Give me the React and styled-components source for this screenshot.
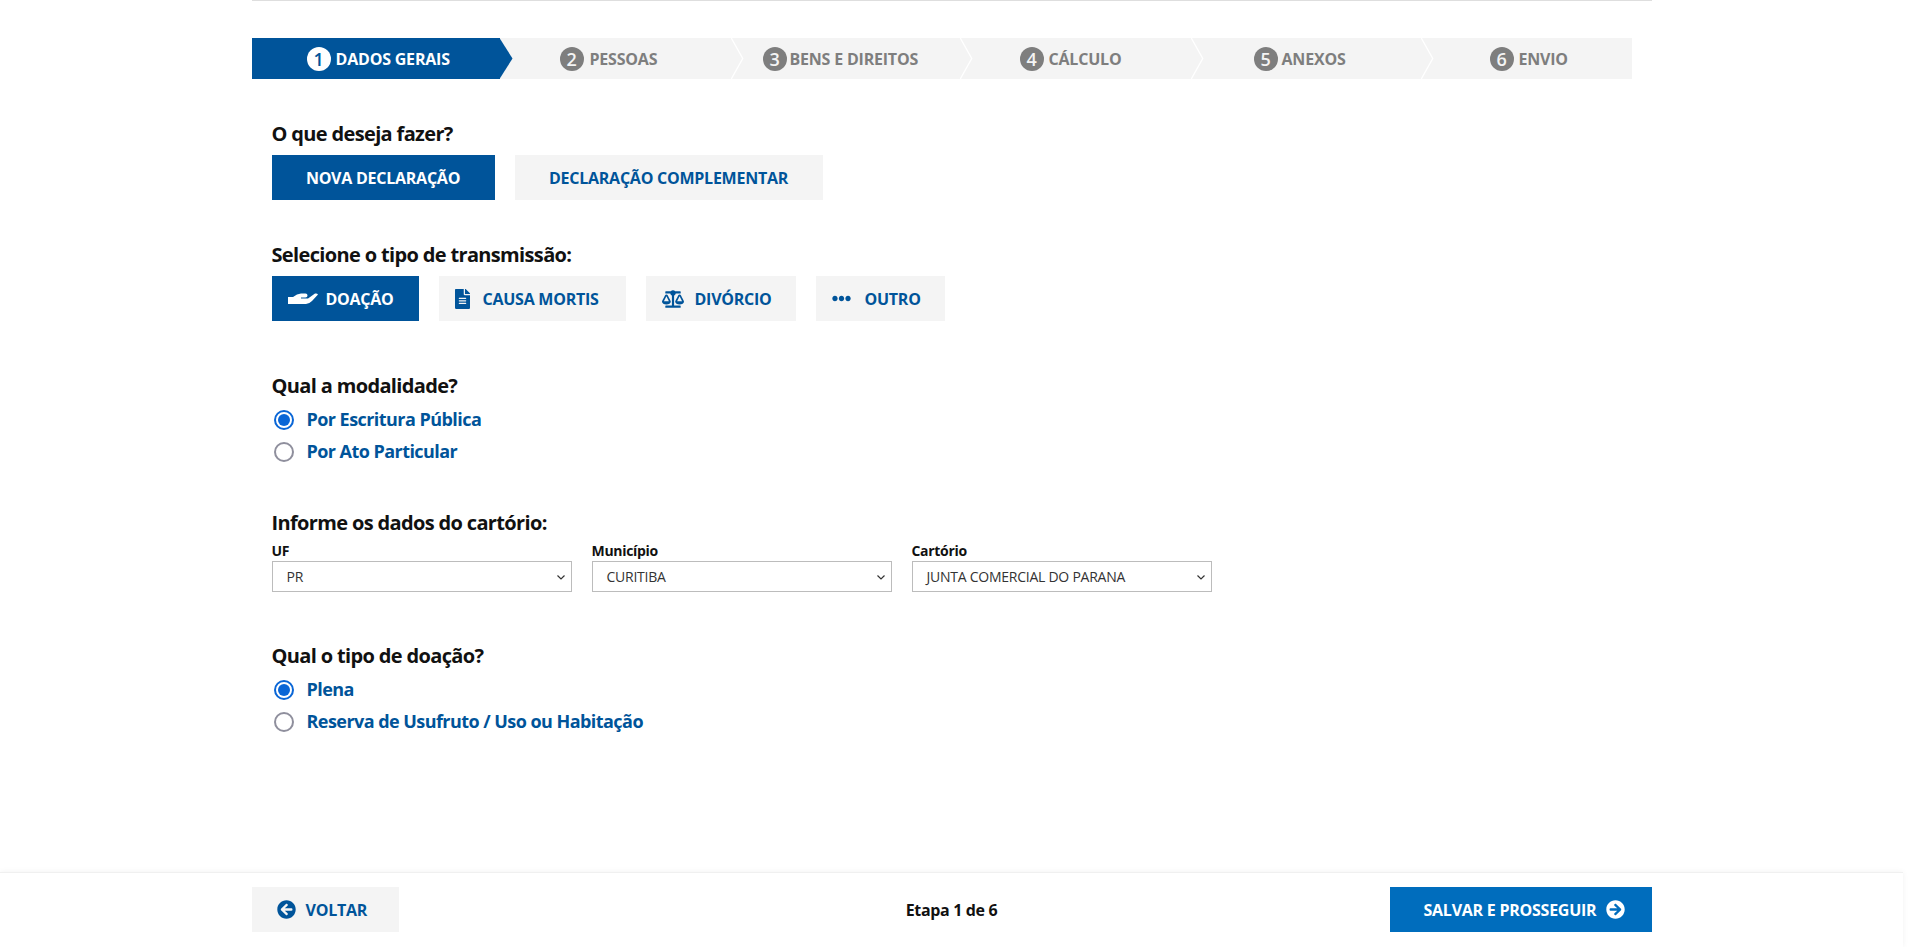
import React from "react";
import styled, { createGlobalStyle } from "styled-components";
import {
  FaFileAlt,
  FaBalanceScale,
  FaEllipsisH,
  FaArrowCircleLeft,
  FaArrowCircleRight,
} from "react-icons/fa";

const BLUE = "#00549a";
const GRAY = "#f4f4f4";
const FONT = `"Open Sans", "Noto Sans", "Liberation Sans", sans-serif`;

const Global = createGlobalStyle`
  html, body { margin: 0; padding: 0; background: #fff; overflow: hidden; }
  body { font-family: ${FONT}; }
  * { box-sizing: border-box; }
`;

const Page = styled.div`
  width: 1903px;
  height: 947px;
  display: flex;
  flex-direction: column;
`;

const Main = styled.main`
  flex: 1;
  width: 1400px;
  margin: 0 auto;
  border-top: 1px solid #dedede;
  padding-top: 37px;
`;

const Stepper = styled.ol`
  display: flex;
  width: 1380px;
  height: 41px;
  margin: 0;
  padding: 0;
  list-style: none;
  background: ${GRAY};
`;

const Step = styled.li`
  position: relative;
  width: ${(p) => p.$width}px;
  padding-left: ${(p) => p.$pad}px;
  display: flex;
  align-items: center;
  gap: ${(p) => p.$gap}px;
  background: ${(p) => (p.$active ? BLUE : "transparent")};
  color: ${(p) => (p.$active ? "#fff" : "#7e7e7e")};
  font-size: 16px;
  font-weight: 700;
  letter-spacing: -0.2px;

  &::after {
    content: ${(p) => (p.$last ? "none" : '""')};
    position: absolute;
    top: 0;
    left: 100%;
    width: 13px;
    height: 100%;
    background: ${(p) => (p.$active ? BLUE : "#fff")};
    clip-path: ${(p) =>
      p.$active
        ? "polygon(0 0, 100% 50%, 0 100%)"
        : "polygon(0 0, 1.5px 0, 13px 50%, 1.5px 100%, 0 100%, 11.5px 50%)"};
  }
`;

const StepNumber = styled.span`
  width: 24px;
  height: 24px;
  border-radius: 50%;
  display: flex;
  align-items: center;
  justify-content: center;
  background: ${(p) => (p.$active ? "#fff" : "#7e7e7e")};
  color: ${(p) => (p.$active ? BLUE : GRAY)};
  font-size: 18px;
  font-weight: 600;
`;

const Content = styled.div`
  padding-left: 20px;
`;

const Section = styled.section`
  margin-top: ${(p) => p.$top}px;
`;

const Heading = styled.h2`
  margin: 0;
  height: 27px;
  line-height: 27px;
  font-size: 20px;
  font-weight: 700;
  letter-spacing: -0.65px;
  color: #111;
`;

const ButtonRow = styled.div`
  display: flex;
  gap: 20px;
  margin-top: 8px;
`;

const Choice = styled.button`
  width: ${(p) => p.$width}px;
  height: 45px;
  border: 0;
  padding: 0 0 0 ${(p) => (p.$center ? 0 : 16)}px;
  display: flex;
  align-items: center;
  justify-content: ${(p) => (p.$center ? "center" : "flex-start")};
  gap: ${(p) => p.$gap || 8}px;
  background: ${(p) => (p.$active ? BLUE : GRAY)};
  color: ${(p) => (p.$active ? "#fff" : BLUE)};
  font-family: ${FONT};
  font-size: 16px;
  font-weight: 700;
  letter-spacing: -0.25px;
`;

const DocIcon = styled(FaFileAlt)`
  width: 15px;
  height: 20px;
`;

const RadioGroup = styled.div`
  display: flex;
  flex-direction: column;
  gap: 11px;
  margin-top: 9px;
`;

const RadioRow = styled.label`
  display: flex;
  align-items: center;
  gap: 13px;
  height: 21px;
  padding-left: 2px;
  color: ${BLUE};
  font-size: 18px;
  font-weight: 700;
  letter-spacing: -0.55px;
`;

const RadioMark = styled.span`
  width: 20px;
  height: 20px;
  margin-top: 2px;
  border-radius: 50%;
  background: #fff;
  border: 2px solid ${(p) => (p.$checked ? "#0a66d6" : "#8f8f9d")};
  padding: 2px;
  display: flex;

  &::after {
    content: "";
    flex: 1;
    border-radius: 50%;
    background: ${(p) => (p.$checked ? "#0a66d6" : "transparent")};
  }
`;

const Fields = styled.div`
  display: flex;
  gap: 20px;
  margin-top: 5px;
`;

const Field = styled.div`
  width: 300px;
`;

const FieldLabel = styled.div`
  height: 20px;
  line-height: 20px;
  font-size: 14px;
  font-weight: 700;
  letter-spacing: -0.3px;
  color: #111;
`;

const SelectBox = styled.div`
  height: 31px;
  border: 1px solid #bcbcbc;
  padding: 0 4px 0 14px;
  display: flex;
  align-items: center;
  justify-content: space-between;
  color: #333;
  font-size: 14px;
  letter-spacing: -0.25px;
`;

const Footer = styled.footer`
  height: 75px;
  border-top: 1px solid #f0f0f0;
  box-shadow: 0 0 6px rgba(0, 0, 0, 0.06);
  padding: 14px 0 0;
`;

const FooterBar = styled.div`
  width: 1400px;
  margin: 0 auto;
  display: grid;
  grid-template-columns: 1fr auto 1fr;
  align-items: center;
`;

const NavButton = styled.button`
  width: ${(p) => p.$width}px;
  height: 45px;
  border: 0;
  padding: 0 0 0 ${(p) => p.$pad}px;
  justify-self: ${(p) => (p.$primary ? "end" : "start")};
  display: flex;
  align-items: center;
  gap: 10px;
  background: ${(p) => (p.$primary ? "#006dbd" : GRAY)};
  color: ${(p) => (p.$primary ? "#fff" : BLUE)};
  font-family: ${FONT};
  font-size: 16px;
  font-weight: 700;
  letter-spacing: -0.25px;
`;

const StageText = styled.span`
  font-size: 16px;
  font-weight: 700;
  letter-spacing: -0.35px;
  color: #111;
`;

const steps = [
  { label: "DADOS GERAIS", width: 248, pad: 55, gap: 5 },
  { label: "PESSOAS", width: 231, pad: 60, gap: 6 },
  { label: "BENS E DIREITOS", width: 229, pad: 32, gap: 3 },
  { label: "CÁLCULO", width: 231, pad: 60, gap: 5 },
  { label: "ANEXOS", width: 230, pad: 63, gap: 4 },
  { label: "ENVIO", width: 211, pad: 69, gap: 5 },
];

const Chevron = () => (
  <svg width="12" height="12" viewBox="0 0 12 12" fill="none" stroke="#333" strokeWidth="1.2">
    <path d="M2.5 4.5l3.5 3.5 3.5-3.5" />
  </svg>
);

const HandIcon = () => (
  <svg width="30" height="11" viewBox="0 0 30 11" fill="currentColor">
    <path d="M0 4H5Q9 .5 13 .5H17.5Q19.5 .5 19.5 2.5Q19.5 4.5 17.5 4.5H13V5.5H20L27 .6Q29 0 30 1.5L24 8Q21 11 18 11H0Z" />
  </svg>
);

const Radio = ({ checked, children }) => (
  <RadioRow>
    <RadioMark $checked={checked} />
    {children}
  </RadioRow>
);

const Select = ({ label, value }) => (
  <Field>
    <FieldLabel>{label}</FieldLabel>
    <SelectBox>
      {value}
      <Chevron />
    </SelectBox>
  </Field>
);

export default function App() {
  return (
    <Page>
      <Global />
      <Main>
        <Stepper>
          {steps.map((s, i) => (
            <Step
              key={s.label}
              $width={s.width}
              $pad={s.pad}
              $gap={s.gap}
              $active={i === 0}
              $last={i === steps.length - 1}
            >
              <StepNumber $active={i === 0}>{i + 1}</StepNumber>
              {s.label}
            </Step>
          ))}
        </Stepper>
        <Content>
          <Section $top={41}>
            <Heading>O que deseja fazer?</Heading>
            <ButtonRow>
              <Choice $active $center $width={223}>NOVA DECLARAÇÃO</Choice>
              <Choice $center $width={308}>DECLARAÇÃO COMPLEMENTAR</Choice>
            </ButtonRow>
          </Section>
          <Section $top={41}>
            <Heading>Selecione o tipo de transmissão:</Heading>
            <ButtonRow>
              <Choice $active $width={147}>
                <HandIcon />
                DOAÇÃO
              </Choice>
              <Choice $width={187} $gap={13}>
                <DocIcon />
                CAUSA MORTIS
              </Choice>
              <Choice $width={150} $gap={11}>
                <FaBalanceScale size={22} />
                DIVÓRCIO
              </Choice>
              <Choice $width={129} $gap={14}>
                <FaEllipsisH size={19} />
                OUTRO
              </Choice>
            </ButtonRow>
          </Section>
          <Section $top={51}>
            <Heading>Qual a modalidade?</Heading>
            <RadioGroup>
              <Radio checked>Por Escritura Pública</Radio>
              <Radio>Por Ato Particular</Radio>
            </RadioGroup>
          </Section>
          <Section $top={48}>
            <Heading>Informe os dados do cartório:</Heading>
            <Fields>
              <Select label="UF" value="PR" />
              <Select label="Município" value="CURITIBA" />
              <Select label="Cartório" value="JUNTA COMERCIAL DO PARANA" />
            </Fields>
          </Section>
          <Section $top={50}>
            <Heading>Qual o tipo de doação?</Heading>
            <RadioGroup>
              <Radio checked>Plena</Radio>
              <Radio>Reserva de Usufruto / Uso ou Habitação</Radio>
            </RadioGroup>
          </Section>
        </Content>
      </Main>
      <Footer>
        <FooterBar>
          <NavButton $width={147} $pad={25}>
            <FaArrowCircleLeft size={19} />
            VOLTAR
          </NavButton>
          <StageText>Etapa 1 de 6</StageText>
          <NavButton $primary $width={262} $pad={34}>
            SALVAR E PROSSEGUIR
            <FaArrowCircleRight size={19} />
          </NavButton>
        </FooterBar>
      </Footer>
    </Page>
  );
}
